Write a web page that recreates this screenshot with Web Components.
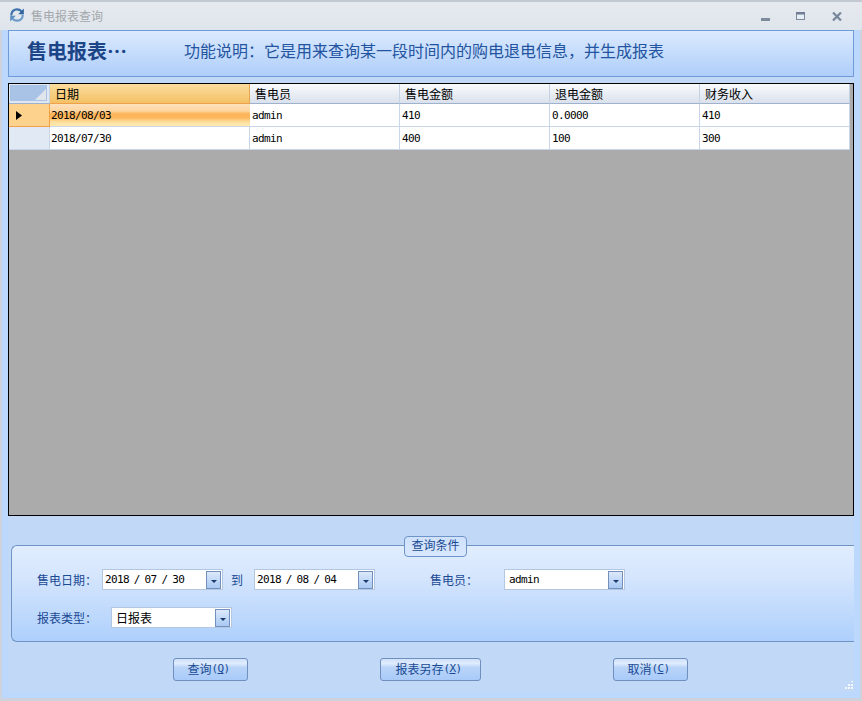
<!doctype html>
<html>
<head>
<meta charset="utf-8">
<title>售电报表查询</title>
<style>
  html, body { margin: 0; padding: 0; height: 100%; overflow: hidden; }
  body { font: 12px "Noto Sans CJK SC", "Liberation Sans", sans-serif; }
</style>
</head>
<body>

<template id="tpl-window">
  <style>
    :host { display: flex; flex-direction: column; width: 862px; height: 701px; box-sizing: border-box;
      background: #bcd9fd; position: relative; border-bottom: 3px solid #ccd3dc;
      box-shadow: inset 2px 0 #ccd3dc, inset -2px 0 #ccd3dc; }
    .body { flex: 1; display: flex; flex-direction: column; margin: 0 8px 6px; background: #c1d8f6; }
    .grip { position: absolute; right: 9px; bottom: 8px; }
  </style>
  <slot name="title"></slot>
  <div class="body"><slot></slot></div>
  <svg class="grip" width="9" height="9" viewBox="0 0 9 9" fill="#f4f8fd">
    <rect x="7" y="0" width="2" height="1"/><rect x="7" y="3" width="2" height="2"/><rect x="4" y="3" width="2" height="2"/>
    <rect x="7" y="6" width="2" height="2"/><rect x="4" y="6" width="2" height="2"/><rect x="1" y="6" width="2" height="2"/>
  </svg>
</template>

<template id="tpl-titlebar">
  <style>
    :host { display: flex; align-items: center; height: 30px; box-sizing: border-box; flex: none;
      border-top: 2px solid #c3c9d1; background: linear-gradient(#e6eaef, #dfe5ec); padding: 0 0 2px 10px; }
    .ico { margin-right: 7px; }
    .t { color: #a3a7ab; font-size: 12px; flex: 1; }
    .btns { display: flex; align-items: center; padding: 2px 20px 0 0; gap: 26px; }
  </style>
  <svg class="ico" width="14" height="14" viewBox="0 0 14 14" fill="none">
    <path d="M1.2 7.5C1.2 3.4 4 1.3 7 1.3c2 0 3.4.8 4.4 2" stroke="#3f72aa" stroke-width="2.2"/>
    <path d="M13.8 .6v5.6H8.2z" fill="#2f639e"/>
    <path d="M12.8 6.5c0 4.1-2.8 6.2-5.8 6.2-2 0-3.4-.8-4.4-2" stroke="#6f9ccb" stroke-width="2.2"/>
    <path d="M.2 13.4V7.8h5.6z" fill="#5f8fc2"/>
  </svg>
  <span class="t"><slot></slot></span>
  <div class="btns">
    <svg width="9" height="10" viewBox="0 0 9 10"><rect y="7" width="9" height="3" fill="#7d8b9d"/></svg>
    <svg width="10" height="9" viewBox="0 0 10 9"><rect x=".5" y=".5" width="8" height="7" fill="#e8eef6" stroke="#7d8b9d"/><rect width="9" height="2.5" fill="#6f7e92"/></svg>
    <svg width="10" height="9" viewBox="0 0 10 9"><path d="M1 .5l8 8M9 .5l-8 8" stroke="#77879b" stroke-width="2.2"/></svg>
  </div>
</template>

<template id="tpl-banner">
  <style>
    :host { display: flex; align-items: center; height: 47px; box-sizing: border-box; flex: none;
      border: 1px solid #6f9bd8; background: linear-gradient(#dceafe, #aecefa); color: #1c4587; padding: 0 0 7px 18px; }
    .h { font-size: 20px; font-weight: 700; width: 157px; }
    .d { font-size: 16px; color: #2354a0; }
  </style>
  <span class="h"><slot name="head"></slot></span>
  <span class="d"><slot></slot></span>
</template>

<template id="tpl-grid">
  <style>
    :host { display: block; height: 433px; box-sizing: border-box; flex: none; margin-top: 6px;
      border: 1px solid #000; background: #ababab; }
    .rows { display: grid; grid-template-columns: 41px 200px 150px 150px 150px 150px; width: 841px; }
  </style>
  <div class="rows"><slot></slot></div>
</template>

<template id="tpl-cell">
  <style>
    :host { display: flex; align-items: center; box-sizing: border-box; height: 23px; background: #fff;
      border-right: 1px solid #c9d6ea; border-bottom: 1px solid #c9d6ea; padding-left: 2px;
      font: 11px "DejaVu Sans Mono", "Noto Sans CJK SC", monospace; letter-spacing: -.62px; color: #000; white-space: pre; }
    :host([kind=head]) { height: 20px; background: linear-gradient(#f9fbfe, #dae1ec); border-bottom: 1px solid #9fb2cd;
      border-right: 1px solid #c5d2e4; padding-left: 5px; font: 12px "Noto Sans CJK SC", sans-serif; letter-spacing: 0; }
    :host([kind=headsel]) { height: 20px; background: linear-gradient(#f9dc9e, #f4c265); border-bottom: 1px solid #f0a04a;
      border-right: 1px solid #e8a552; padding-left: 5px; font: 12px "Noto Sans CJK SC", sans-serif; letter-spacing: 0; }
    :host([kind=sel]) { background: linear-gradient(#fee1bb 0%, #fed5a0 32%, #fdb55a 45%, #fdb65c 62%, #fde0a0 82%, #fee9ae 100%); border-right: none; padding-left: 1px; }
    :host([kind=first]) { padding-left: 1px; }
    :host([kind=corner]) { height: 20px; background: #dfe7f2; padding: 1px 2px 2px 1px; border-bottom: 1px solid #9fb2cd; border-right: 1px solid #c5d2e4; }
    :host([kind=rowsel]) { background: #fdd28d; border-right: 1px solid #f0a04a; border-bottom: 1px solid #f0a04a; padding-left: 7px; }
    :host([kind=row]) { background: #e1e9f5; }
    .c { flex: 1; height: 100%; background: #a9c3e7; position: relative; }
    .c::after { content: ""; position: absolute; right: 1px; bottom: 1px; border-style: solid; border-width: 0 0 11px 11px;
      border-color: transparent transparent #e0e5ec transparent; }
  </style>
  <slot></slot>
</template>

<template id="tpl-group">
  <style>
    :host { display: flex; flex-direction: column; gap: 17px; box-sizing: border-box; flex: none; position: relative;
      height: 97px; margin: 29px 0 0 3px; padding: 23px 0 0 25px;
      border: 1px solid #6f95c8; border-right: none; border-radius: 6px 0 0 6px;
      background: linear-gradient(#e0edfe, #d6e6fd 30%, #aed0fc); }
    .legend { position: absolute; left: 392px; top: -10px; width: 63px; height: 21px; box-sizing: border-box;
      display: flex; align-items: center; justify-content: center; border: 1px solid #6f95c8; border-radius: 4px;
      background: linear-gradient(#cfe1fb, #d8e8fe); color: #1b4a94; font-size: 12px; padding-bottom: 5px; }
  </style>
  <div class="legend"><slot name="legend"></slot></div>
  <slot></slot>
</template>

<template id="tpl-row">
  <style>
    :host { display: flex; align-items: center; height: 21px; color: #1b4a94; font-size: 12px; }
    ::slotted(span) { padding-bottom: 1px; }
  </style>
  <slot></slot>
</template>

<template id="tpl-field">
  <style>
    :host { display: flex; align-items: center; justify-content: space-between; box-sizing: border-box;
      width: 121px; height: 21px; background: #fff; border: 1px solid #b3c7e3; padding: 0 1px 0 2px; flex: none;
      font: 11px "DejaVu Sans Mono", "Noto Sans CJK SC", monospace; letter-spacing: -.62px; word-spacing: -1.2px; color: #000; white-space: pre; }
    :host([combo]) { padding-left: 4px; }
    :host([cn]) { padding-left: 4px; font: 12px "Noto Sans CJK SC", sans-serif; letter-spacing: 0; }
    .b { width: 15px; height: 18px; box-sizing: border-box; border: 1px solid #7390bd; background: linear-gradient(#dce9fb, #a9c8f3);
      display: flex; align-items: center; justify-content: center; }
    .b::after { content: ""; border-style: solid; border-width: 3px 3.5px 0 3.5px; border-color: #17396e transparent transparent transparent; margin-top: 3px; }
  </style>
  <span><slot></slot></span>
  <span class="b"></span>
</template>

<template id="tpl-btn">
  <style>
    :host { display: flex; align-items: center; justify-content: center; box-sizing: border-box; height: 23px; flex: none;
      border: 1px solid #6f8fbf; border-radius: 3px; background: linear-gradient(#cfe1fa, #e0ecfd 22%, #b9d4f8 40%, #a9cbf9 100%);
      color: #1b4a94; font-size: 12px; white-space: pre; padding: 0 3px 2px 0; }
    ::slotted(span) { font: 11px "DejaVu Sans Mono", monospace; letter-spacing: -.62px; }
  </style>
  <slot></slot>
</template>

<template id="tpl-actions">
  <style>
    :host { display: flex; justify-content: center; gap: 132px; margin-top: 16px; padding-right: 2px; flex: none; }
  </style>
  <slot></slot>
</template>

<x-window>
  <x-titlebar slot="title">售电报表查询</x-titlebar>
  <x-banner><span slot="head">售电报表…</span>功能说明：它是用来查询某一段时间内的购电退电信息，并生成报表</x-banner>
  <x-grid>
    <x-cell kind="corner"></x-cell>
    <x-cell kind="headsel">日期</x-cell><x-cell kind="head">售电员</x-cell><x-cell kind="head">售电金额</x-cell><x-cell kind="head">退电金额</x-cell><x-cell kind="head">财务收入</x-cell>
    <x-cell kind="rowsel"><svg width="6" height="9" viewBox="0 0 6 9"><path d="M0 0l6 4.5L0 9z"/></svg></x-cell>
    <x-cell kind="sel">2018/08/03</x-cell><x-cell>admin</x-cell><x-cell>410</x-cell><x-cell>0.0000</x-cell><x-cell>410</x-cell>
    <x-cell kind="row"></x-cell>
    <x-cell kind="first">2018/07/30</x-cell><x-cell>admin</x-cell><x-cell>400</x-cell><x-cell>100</x-cell><x-cell>300</x-cell>
  </x-grid>
  <x-group>
    <span slot="legend">查询条件</span>
    <x-row>
      <span style="width:65px">售电日期：</span>
      <x-field>2018 / 07 / 30</x-field>
      <span style="width:23px;padding-left:8px">到</span>
      <x-field>2018 / 08 / 04</x-field>
      <span style="width:74px;margin-left:55px">售电员：</span>
      <x-field combo>admin</x-field>
    </x-row>
    <x-row>
      <span style="width:74px">报表类型：</span>
      <x-field cn>日报表</x-field>
    </x-row>
  </x-group>
  <x-actions>
    <x-btn style="width:75px">查询<span>(<u>Q</u>)</span></x-btn>
    <x-btn style="width:101px">报表另存<span>(<u>X</u>)</span></x-btn>
    <x-btn style="width:75px">取消<span>(<u>C</u>)</span></x-btn>
  </x-actions>
</x-window>

<script>
  // every element just stamps its own template into an open shadow root
  function define(name, tplId) {
    customElements.define(name, class extends HTMLElement {
      constructor() {
        super();
        let root = this.attachShadow({mode: 'open'});
        root.appendChild(document.getElementById(tplId).content.cloneNode(true));
      }
    });
  }
  define('x-window', 'tpl-window');
  define('x-titlebar', 'tpl-titlebar');
  define('x-banner', 'tpl-banner');
  define('x-grid', 'tpl-grid');
  define('x-group', 'tpl-group');
  define('x-row', 'tpl-row');
  define('x-field', 'tpl-field');
  define('x-btn', 'tpl-btn');
  define('x-actions', 'tpl-actions');

  customElements.define('x-cell', class extends HTMLElement {
    constructor() {
      super();
      let root = this.attachShadow({mode: 'open'});
      root.appendChild(document.getElementById('tpl-cell').content.cloneNode(true));
      if (this.getAttribute('kind') === 'corner') {
        let c = document.createElement('div');
        c.className = 'c';
        root.appendChild(c);
      }
    }
  });
</script>
</body>
</html>
